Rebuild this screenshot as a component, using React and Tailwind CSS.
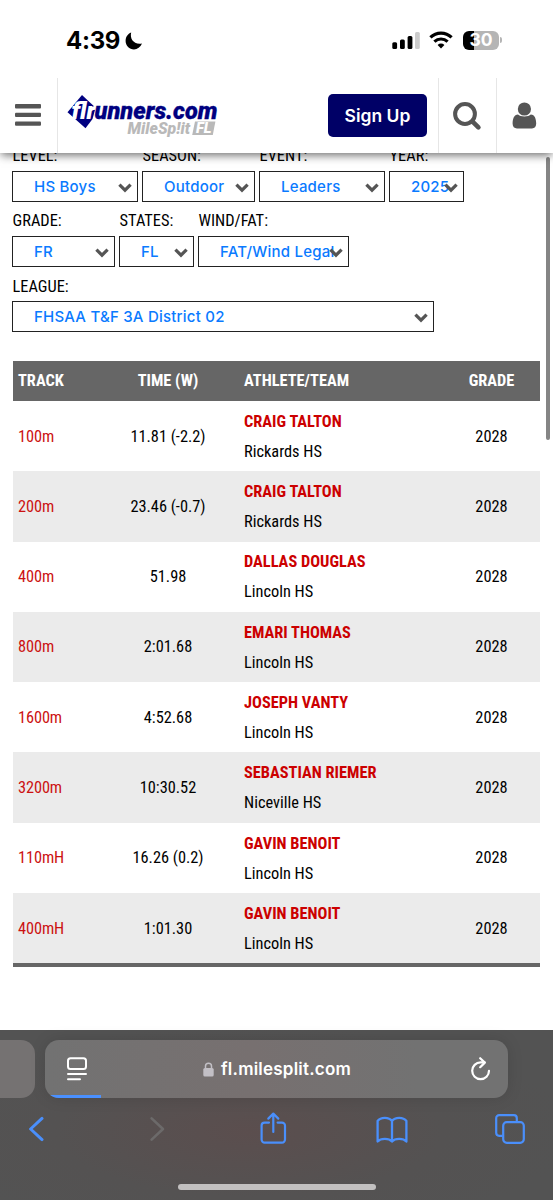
import React from 'react'

const filterRows = [
  [
    { label: 'LEVEL:', value: 'HS Boys', box: 'w-[126px]' },
    { label: 'SEASON:', value: 'Outdoor', box: 'w-[113px]' },
    { label: 'EVENT:', value: 'Leaders', box: 'w-[126px]' },
    { label: 'YEAR:', value: '2025', box: 'w-[75px]' },
  ],
  [
    { label: 'GRADE:', value: 'FR', box: 'w-[103px]' },
    { label: 'STATES:', value: 'FL', box: 'w-[75px]' },
    { label: 'WIND/FAT:', value: 'FAT/Wind Legal', box: 'w-[151px]' },
  ],
  [{ label: 'LEAGUE:', value: 'FHSAA T&F 3A District 02', box: 'w-[422px]' }],
]

const results = [
  { track: '100m', time: '11.81 (-2.2)', athlete: 'CRAIG TALTON', team: 'Rickards HS', grade: '2028' },
  { track: '200m', time: '23.46 (-0.7)', athlete: 'CRAIG TALTON', team: 'Rickards HS', grade: '2028' },
  { track: '400m', time: '51.98', athlete: 'DALLAS DOUGLAS', team: 'Lincoln HS', grade: '2028' },
  { track: '800m', time: '2:01.68', athlete: 'EMARI THOMAS', team: 'Lincoln HS', grade: '2028' },
  { track: '1600m', time: '4:52.68', athlete: 'JOSEPH VANTY', team: 'Lincoln HS', grade: '2028' },
  { track: '3200m', time: '10:30.52', athlete: 'SEBASTIAN RIEMER', team: 'Niceville HS', grade: '2028' },
  { track: '110mH', time: '16.26 (0.2)', athlete: 'GAVIN BENOIT', team: 'Lincoln HS', grade: '2028' },
  { track: '400mH', time: '1:01.30', athlete: 'GAVIN BENOIT', team: 'Lincoln HS', grade: '2028' },
]

const StatusBar = () => (
  <div className="relative z-20 flex h-[78px] items-center justify-between bg-white pl-[66px] pr-[51px] pt-[2px]">
    <div className="flex items-center gap-[5px] pt-[1px]">
      <span className="text-[24px] font-bold leading-none tracking-[-0.3px] text-black">4:39</span>
      <svg className="h-[18px] w-[18px]" viewBox="0 0 18 18">
        <path d="M6.2 0.6C4.6 6.6 8.6 13 17 11.6C15.4 15.4 12.4 17.4 9 17.4C4.4 17.4 0.6 13.8 0.6 9C0.6 5 2.8 2 6.2 0.6Z" fill="#000" />
      </svg>
    </div>
    <div className="flex items-center">
      <svg className="h-[17px] w-[28px]" viewBox="0 0 28 17">
        <rect x="0.3" y="10.3" width="4.8" height="6.7" rx="1.5" fill="#000" />
        <rect x="8" y="7.5" width="4.8" height="9.5" rx="1.5" fill="#000" />
        <rect x="15.6" y="4" width="4.8" height="13" rx="1.5" fill="#000" />
        <rect x="23" y="0" width="4.8" height="17" rx="1.5" fill="#ccc" />
      </svg>
      <svg className="ml-[9px] h-[18px] w-[24px]" viewBox="0 0 24 18">
        <path d="M1.4 6.4C7.4 0.7 16.6 0.7 22.6 6.4" stroke="#000" strokeWidth="3.2" fill="none" />
        <path d="M5.4 10.6C9.2 7.1 14.8 7.1 18.6 10.6" stroke="#000" strokeWidth="3.2" fill="none" />
        <path d="M12 17.4L8.6 13.9C10.6 12.1 13.4 12.1 15.4 13.9Z" fill="#000" />
      </svg>
      <div className="ml-[10px] flex items-center">
        <div className="flex h-[19px] w-[36px] items-center justify-center rounded-[6px] bg-[linear-gradient(to_right,#000_31%,#b5b5b5_31%)]">
          <span className="text-[17.5px] font-bold leading-none text-white">30</span>
        </div>
        <div className="ml-[1px] h-[6px] w-[2px] rounded-r-full bg-[#b5b5b5]" />
      </div>
    </div>
  </div>
)

const Logo = () => (
  <svg className="h-[50px] w-[160px]" viewBox="0 0 160 50" fontFamily="Roboto, sans-serif" fontWeight="900" fontStyle="italic">
    <path d="M15 2L28.6 14.8L25.5 26L18.5 35.3L0.5 19.3Z" fill="#000080" />
    <text x="4.5" y="26" fontSize="23" textLength="24" lengthAdjust="spacingAndGlyphs" fill="#fff">flr</text>
    <text x="27.5" y="26" fontSize="23.5" textLength="123" lengthAdjust="spacingAndGlyphs" fill="#000080" stroke="#000080" strokeWidth="0.3">unners.com</text>
    <text x="60.5" y="41.2" fontSize="16.8" textLength="62.5" lengthAdjust="spacingAndGlyphs" fill="#b9b9b9">MileSp!it</text>
    <path d="M128 28.6H148.4L145.8 42H125.2Z" fill="#b9b9b9" />
    <text x="129" y="40.2" fontSize="14" textLength="15.5" lengthAdjust="spacingAndGlyphs" fill="#fff">FL</text>
  </svg>
)

const SiteHeader = () => (
  <header className="relative z-10 flex h-[75px] items-stretch bg-white shadow-[0_3px_9px_-1px_rgba(0,0,0,0.6)]">
    <div className="flex w-[58px] items-center border-r border-[#e6e6e6] pb-[2px] pl-[15px]">
      <svg className="h-[22px] w-[26px]" viewBox="0 0 26 22" fill="#555">
        <rect y="0" width="26" height="4.4" rx="1" />
        <rect y="8.7" width="26" height="4.4" rx="1" />
        <rect y="17.4" width="26" height="4.4" rx="1" />
      </svg>
    </div>
    <div className="flex flex-1 items-start justify-between pl-[9px] pr-[11px] pt-[15px]">
      <Logo />
      <button className="mt-px flex h-[43px] w-[99px] items-center justify-center rounded-[5px] bg-[#000066]">
        <span className="text-[17.5px] font-semibold leading-none text-white">Sign Up</span>
      </button>
    </div>
    <div className="flex w-[58px] items-center justify-center border-l border-[#e6e6e6] pr-[2px]">
      <svg className="h-[30px] w-[30px]" viewBox="0 0 30 30" fill="none" stroke="#555">
        <circle cx="13" cy="13" r="9.9" strokeWidth="4" />
        <path d="M20.6 20.6L26.4 26.4" strokeWidth="4.6" strokeLinecap="round" />
      </svg>
    </div>
    <div className="flex w-[57px] items-center justify-center border-l border-[#e6e6e6] pb-[1px] pr-[1px]">
      <svg className="h-[27px] w-[25px]" viewBox="0 0 25 27" fill="#555">
        <circle cx="12.4" cy="7" r="6.6" />
        <path d="M6 12.5C8 15 16.8 15 18.8 12.5C22.8 12.5 24.2 17 24.2 21.5C24.2 24.7 22.6 26.4 20 26.4H5C2.2 26.4 0.6 24.7 0.6 21.5C0.6 17 2 12.5 6 12.5Z" />
      </svg>
    </div>
  </header>
)

const Filter = ({ label, value, box }) => (
  <div className={box}>
    <div className="h-[24.5px] whitespace-nowrap pl-[0.5px] font-['Roboto_Condensed',Roboto,sans-serif] text-[16.4px] leading-[19px] text-black font-stretch-condensed">
      {label}
    </div>
    <div className="relative flex h-[31px] items-center border-[1.5px] border-[#222] bg-white pl-[21px]">
      <span className="whitespace-nowrap text-[15px] font-medium leading-none tracking-[0.22px] text-[#0a7aff]">{value}</span>
      <svg className="absolute right-[5.5px] top-[11px] h-[10px] w-[14px]" viewBox="0 0 14 10">
        <path d="M1.4 1.6L7 7.2L12.6 1.6" fill="none" stroke="#555" strokeWidth="3.2" />
      </svg>
    </div>
  </div>
)

const ResultsTable = () => (
  <div className="w-[527px] border-b-4 border-[#666]">
    <table className="w-full table-fixed border-collapse font-['Roboto_Condensed',Roboto,sans-serif] text-[16.35px] text-black font-stretch-condensed">
      <colgroup>
        <col className="w-[85px]" />
        <col className="w-[140px]" />
        <col className="w-[205px]" />
        <col className="w-[97px]" />
      </colgroup>
      <thead>
        <tr className="h-[40px] bg-[#666] text-white">
          <th className="pl-[5px] text-left font-bold">TRACK</th>
          <th className="text-center font-bold">TIME (W)</th>
          <th className="pl-[6px] text-left font-bold">ATHLETE/TEAM</th>
          <th className="text-center font-bold">GRADE</th>
        </tr>
      </thead>
      <tbody>
        {results.map((row) => (
          <tr key={row.track} className="h-[70.3px] even:bg-[#ebebeb]">
            <td className="pl-[5px] pt-[1.4px] tracking-[-0.1px] text-[#cc1111]">{row.track}</td>
            <td className="pt-[1.4px] text-center">{row.time}</td>
            <td className="pl-[6px] pt-[1.2px] leading-[30px]">
              <div className="font-bold text-[#cc0000]">{row.athlete}</div>
              <div>{row.team}</div>
            </td>
            <td className="pt-[1.4px] text-center">{row.grade}</td>
          </tr>
        ))}
      </tbody>
    </table>
  </div>
)

const BrowserBar = () => (
  <footer className="h-[170px] bg-[#545454] bg-[radial-gradient(ellipse_at_45%_60%,#5b4e4e_0%,#545252_45%,#535353_75%)] pt-[10px]">
    <div className="flex gap-[10px]">
      <div className="h-[58px] w-[35px] rounded-r-[14px] bg-[#757272]" />
      <div className="relative flex h-[58px] w-[463px] items-center overflow-hidden rounded-[14px] bg-[#757272] bg-[linear-gradient(90deg,#727272,#777070_45%,#727272_80%)] shadow-[0_0_16px_rgba(0,0,0,0.12)]">
        <svg className="ml-[22px] h-[24px] w-[20px]" viewBox="0 0 20 24" fill="none" stroke="#fff" strokeWidth="2" strokeLinecap="round">
          <rect x="1" y="1.2" width="18" height="10.8" rx="2.5" />
          <path d="M1 17H19M1 22.2H13" />
        </svg>
        <div className="ml-[116px] flex items-center gap-[7px]">
          <svg className="h-[15px] w-[11px]" viewBox="0 0 11 15">
            <rect x="0.3" y="6" width="10.4" height="8.6" rx="1.5" fill="#c2bfc5" />
            <path d="M2.5 6.5V4C2.5 0.2 8.5 0.2 8.5 4V6.5" fill="none" stroke="#c2bfc5" strokeWidth="1.5" />
          </svg>
          <span className="text-[17px] font-semibold leading-none tracking-[0.22px] text-white">fl.milesplit.com</span>
        </div>
        <svg className="ml-auto mr-[17px] h-[24px] w-[21px]" viewBox="0 0 21 24" fill="none" stroke="#fff" strokeWidth="2.2" strokeLinecap="round" strokeLinejoin="round">
          <path d="M14.5 5.4H10.6A8.4 8.4 0 1 0 19 13.8" />
          <path d="M10.2 1.2L14.8 5.6L10.2 10.2" />
        </svg>
        <div className="absolute bottom-0 left-0 h-[3.5px] w-[56px] bg-[#4a90ff]" />
      </div>
    </div>
    <div className="flex h-[62px] items-center pl-[28px]">
      <svg className="h-[26px] w-[16px]" viewBox="0 0 16 26" fill="none" stroke="#4a8ffb" strokeWidth="3" strokeLinecap="round" strokeLinejoin="round">
        <path d="M14 2.4L2.6 13L14 23.6" />
      </svg>
      <svg className="ml-[105px] h-[26px] w-[16px]" viewBox="0 0 16 26" fill="none" stroke="#6c6a6a" strokeWidth="2.6" strokeLinecap="round" strokeLinejoin="round">
        <path d="M2.6 2.4L14 13L2.6 23.6" />
      </svg>
      <svg className="-mt-[1px] ml-[95px] h-[33px] w-[27px]" viewBox="0 0 27 33" fill="none" stroke="#4a8ffb" strokeWidth="2.2" strokeLinecap="round" strokeLinejoin="round">
        <path d="M9 10.6H4.6A3 3 0 0 0 1.6 13.6V27.6A3 3 0 0 0 4.6 30.6H22A3 3 0 0 0 25 27.6V13.6A3 3 0 0 0 22 10.6H17.6" />
        <path d="M13.3 20V2M8.3 6.6L13.3 1.6L18.3 6.6" />
      </svg>
      <svg className="ml-[89px] mt-[1px] h-[28px] w-[32px]" viewBox="0 0 32 28" fill="none" stroke="#4a8ffb" strokeWidth="2.3" strokeLinecap="round" strokeLinejoin="round">
        <path d="M16 5C13 0.8 4.6 0.8 1.6 5V25.6C4.6 22 13 22 16 25.6C19 22 27.4 22 30.4 25.6V5C27.4 0.8 19 0.8 16 5ZM16 5V25" />
      </svg>
      <svg className="ml-[87px] h-[30px] w-[30px]" viewBox="0 0 30 30" fill="none" stroke="#4a8ffb" strokeWidth="2.2" strokeLinejoin="round">
        <rect x="8.2" y="8.2" width="20.6" height="20.6" rx="3.5" />
        <path d="M7.5 21.8H4.2A3 3 0 0 1 1.2 18.8V4.2A3 3 0 0 1 4.2 1.2H18.8A3 3 0 0 1 21.8 4.2V7.5" />
      </svg>
    </div>
    <div className="mx-auto mt-[23.5px] h-[6px] w-[198px] rounded-full bg-[#c2c0c0]" />
  </footer>
)

const App = () => {
  return (
    <div className="flex h-[1200px] w-[553px] flex-col overflow-hidden bg-white font-['Inter',sans-serif]">
      <StatusBar />
      <SiteHeader />
      <main className="relative min-h-0 flex-1">
        <div className="-mt-[7px] flex flex-col gap-[9.8px] pl-[12px]">
          {filterRows.map((row, index) => (
            <div key={index} className="flex gap-[4px]">
              {row.map((filter) => (
                <Filter key={filter.label} {...filter} />
              ))}
            </div>
          ))}
        </div>
        <div className="mt-[28.9px] pl-[13px]">
          <ResultsTable />
        </div>
        <div className="absolute right-[3px] top-[4px] h-[283px] w-[4px] rounded-full bg-[#858585]" />
      </main>
      <BrowserBar />
    </div>
  )
}

export default App
